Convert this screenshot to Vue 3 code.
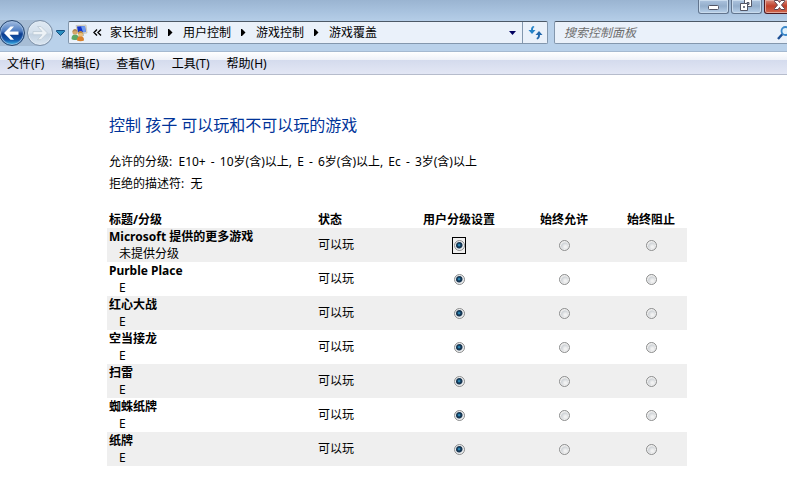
<script setup>
import { ref } from 'vue'

const crumbs = ['家长控制', '用户控制', '游戏控制', '游戏覆盖']
const menus = ['文件(F)', '编辑(E)', '查看(V)', '工具(T)', '帮助(H)']
const allowed = [
  { code: 'E10+', age: '10岁(含)以上' },
  { code: 'E', age: '6岁(含)以上' },
  { code: 'Ec', age: '3岁(含)以上' },
]
const options = [
  { value: 'rating', label: '用户分级设置' },
  { value: 'allow', label: '始终允许' },
  { value: 'block', label: '始终阻止' },
]
const games = ref([
  { title: 'Microsoft 提供的更多游戏', rating: '未提供分级', choice: 'rating', focused: true },
  { title: 'Purble Place', rating: 'E', choice: 'rating' },
  { title: '红心大战', rating: 'E', choice: 'rating' },
  { title: '空当接龙', rating: 'E', choice: 'rating' },
  { title: '扫雷', rating: 'E', choice: 'rating' },
  { title: '蜘蛛纸牌', rating: 'E', choice: 'rating' },
  { title: '纸牌', rating: 'E', choice: 'rating' },
])
const query = ref('')
</script>

<template>
  <div class="window">
    <header class="frame">
      <div class="captions">
        <button class="caption" aria-label="最小化">
          <svg width="31" height="14" viewBox="0 0 31 14"><rect x="10.500" y="5.500" width="10" height="4" rx="1" fill="#fff" stroke="#535666" /></svg>
        </button>
        <button class="caption" aria-label="还原">
          <svg width="31" height="14" viewBox="0 0 31 14" fill="#fff" stroke="#535666">
            <path d="M13.500-.5h7v7h-7z" /><path d="M16 2.500h2v2h-2z" fill="#9ab0cb" />
            <path d="M9.500 3.500h7v7h-7z" /><path d="M12.500 6.500h1v1h-1z" fill="#9ab0cb" />
          </svg>
        </button>
        <button class="caption close" aria-label="关闭">
          <svg width="31" height="14" viewBox="0 0 31 14"><path d="M10.500.5h3.500l1.500 2 1.500-2h3.500v1L17.500 5l3 3.500v1H17l-1.500-2-1.500 2h-3.500v-1l3-3.500-3-3.500z" fill="#fff" stroke="#5b4550" /></svg>
        </button>
      </div>
      <div class="nav">
        <div class="travel">
          <button class="round back" aria-label="后退">
            <svg width="26" height="26" viewBox="0 0 26 26"><path d="M5 13l6.500-6.500H15L10.500 11.500h9v3.200h-9l4.500 5h-3.500z" fill="#fff" /></svg>
          </button>
          <button class="round forward" aria-label="前进">
            <svg width="26" height="26" viewBox="0 0 26 26"><path d="M20.500 13L14 6.500h-3.500l4.500 5H6v3.200h9l-4.500 5H14z" fill="#edf2f6" stroke="#bccad6" stroke-width=".8" /></svg>
          </button>
        </div>
        <button class="recent" aria-label="最近页面">
          <svg width="9" height="6" viewBox="0 0 9 6"><path d="M.5.5h8v1L4.500 5.500.5 1.500z" fill="#2b8fc0" stroke="#164f80" /></svg>
        </button>
        <div class="address">
          <svg class="place" width="17" height="18" viewBox="0 0 17 18">
            <path d="M5 1.500l10-.5 1 8-9 1z" fill="#e2ded0" stroke="#b9b49f" stroke-width=".6" />
            <path d="M6 2.500l8-.5.800 6L7 8.500z" fill="#1334c8" /><path d="M10 2.300l4-.3.800 6-2.800.2z" fill="#6c9af0" />
            <path d="M10 9h3v3h-3z" fill="#c4bfad" />
            <path d="M.5 15c0-3 1-4.500 3.500-4.500S8 12 8 15c-2 1.300-6 1.300-7.500 0z" fill="#5fa866" />
            <circle cx="4" cy="8" r="2.600" fill="#d5a66a" /><path d="M1.500 8c0-4 5-4 5 0-1-1.500-3.500-1.500-5 0z" fill="#b08a55" />
            <path d="M6 16.500c0-3 1-4.500 3.500-4.500s3.500 1.500 3.500 4.500c-2 1-5 1-7 0z" fill="#d9812c" />
            <circle cx="9.500" cy="10" r="2.500" fill="#edc07b" /><path d="M7 10c0-4 5-4 5 0-1-1.500-3.500-1.500-5 0z" fill="#b98a44" />
          </svg>
          <button class="more" aria-label="更多位置">
            <svg width="9" height="7" viewBox="0 0 9 7" fill="none" stroke="#000" stroke-width="1.400"><path d="M4 .5l-3 3 3 3M8 .5l-3 3 3 3" /></svg>
          </button>
          <nav class="crumbs">
            <template v-for="(crumb, i) in crumbs" :key="crumb">
              <svg v-if="i" width="5" height="7" viewBox="0 0 5 7"><path d="M0 0h1l3.500 3.500L1 7H0z" /></svg>
              <a href="#">{{ crumb }}</a>
            </template>
          </nav>
          <button class="drop" aria-label="以前的位置">
            <svg width="7" height="4" viewBox="0 0 7 4"><path d="M0 0h7L3.500 4z" fill="#000060" /></svg>
          </button>
          <button class="refresh" aria-label="刷新">
            <svg width="15" height="14" viewBox="0 0 15 14">
              <path d="M5.500 0C3.500.5 3 2 3 4H.5L4 8l3.500-4H5c0-1.500.2-2.500 1.500-3z" fill="#2583c8" />
              <path d="M9 13.500c2-.5 3-2 3-4.500h2.500L11 5 7.500 9H10c0 1.500-.2 2.500-1.500 3z" fill="#2368ac" />
            </svg>
          </button>
        </div>
        <label class="search">
          <input v-model="query" type="search" placeholder="搜索控制面板" aria-label="搜索控制面板" />
          <svg width="14" height="14" viewBox="0 0 14 14" fill="none"><path d="M1 13l4.500-5" stroke="#1c4f95" stroke-width="2.400" /><circle cx="8.500" cy="5" r="4" stroke="#3b88c9" stroke-width="1.800" fill="#e0f1fc" /></svg>
        </label>
      </div>
    </header>

    <nav class="menubar">
      <button v-for="menu in menus" :key="menu">{{ menu }}</button>
    </nav>

    <main>
      <h1>控制 孩子 可以玩和不可以玩的游戏</h1>
      <p>
        允许的分级:&nbsp;
        <span v-for="(item, i) in allowed" :key="item.code" class="allowed">{{ item.code }} <span class="dash">-</span> {{ item.age }}{{ i < allowed.length - 1 ? ', ' : '' }}</span>
      </p>
      <p>拒绝的描述符:&nbsp; 无</p>
      <table>
        <colgroup><col /><col class="c-status" /><col class="c-rating" /><col class="c-allow" /><col class="c-block" /></colgroup>
        <thead>
          <tr>
            <th>标题/分级</th>
            <th>状态</th>
            <th v-for="option in options" :key="option.value" class="pick">{{ option.label }}</th>
          </tr>
        </thead>
        <tbody>
          <tr v-for="(game, i) in games" :key="game.title">
            <td>
              <strong>{{ game.title }}</strong>
              <span class="sub">{{ game.rating }}</span>
            </td>
            <td class="status">可以玩</td>
            <td v-for="option in options" :key="option.value" class="pick">
              <label :class="{ focused: game.focused && option.value === 'rating' }">
                <input v-model="game.choice" type="radio" :name="'game' + i" :value="option.value" :aria-label="game.title + ' ' + option.label" />
              </label>
            </td>
          </tr>
        </tbody>
      </table>
    </main>
  </div>
</template>

<style>
body {
  margin: 0;
  background: #fff;
}
</style>

<style scoped>
.window {
  overflow: hidden;
  font: 12px/17px "Noto Sans", "Noto Sans CJK SC", sans-serif;
  color: #000;
}
button {
  font: inherit;
  color: inherit;
  padding: 0;
  border: 0;
  background: none;
}
svg {
  display: block;
  flex: none;
}
.frame {
  background: linear-gradient(#9ab4d1, #a9c3df 12px, #b9d1ea 24px, #b9d1ea);
  border-bottom: 1px solid #a5b9d0;
}
.captions {
  display: flex;
  justify-content: flex-end;
  gap: 2px;
  height: 14px;
  margin-right: -8px;
}
.caption {
  box-sizing: border-box;
  width: 31px;
  border: 1px solid #62758e;
  border-top: 0;
  border-radius: 0 0 3px 3px;
  background: linear-gradient(#adc4df, #94aecb 6px, #b9d1ea);
  box-shadow: inset 0 0 0 1px #c9dbed;
  overflow: hidden;
}
.caption svg {
  margin-left: -1px;
}
.close {
  border-color: #4b1820;
  background: linear-gradient(#d98c7c, #c0412b 6px, #d0684f);
  box-shadow: inset 0 0 0 1px #e2a79b;
}
.nav {
  display: flex;
  align-items: center;
  height: 37px;
}
.travel {
  display: flex;
  gap: 2px;
  margin: 0 3px 0 -1px;
  border-radius: 0 14px 14px 0;
  background: #a7bdd5;
}
.round {
  box-sizing: border-box;
  width: 26px;
  height: 26px;
  border-radius: 50%;
  border: 1px solid #26456f;
  overflow: hidden;
}
.round svg {
  margin: -1px;
}
.back {
  background: linear-gradient(#a3bce0, #4f7ec3 10px, #0c3c8e 13px, #1257ac 19px, #41c0ee);
  box-shadow: inset 0 0 1px 1px #9fbde0;
}
.forward {
  border-color: #7c90a8;
  background: linear-gradient(#dfe9f3, #d3dfeb 12px, #c2d1e0 13px, #dbe7f2);
  box-shadow: inset 0 0 0 1px #e2ebf4;
}
.recent {
  display: grid;
  place-items: center;
  width: 9px;
  margin-right: 3px;
}
.address,
.search {
  box-sizing: border-box;
  display: flex;
  align-items: center;
  height: 23px;
  border: 1px solid #8397ad;
  border-top-color: #4c5967;
  border-radius: 2px;
  background: #eaf1fa;
}
.address {
  flex: 1;
  min-width: 0;
  padding-left: 2px;
}
.more {
  margin: 0 8px 0 5px;
}
.crumbs {
  flex: 1;
  display: flex;
  align-items: center;
  gap: 10px;
  white-space: nowrap;
  overflow: hidden;
}
.crumbs a {
  color: inherit;
  text-decoration: none;
}
.drop {
  padding: 0 6px;
}
.refresh {
  display: grid;
  place-items: center;
  width: 25px;
  height: 21px;
  border-left: 1px solid #8397ad;
}
.search {
  width: 240px;
  margin: 0 -7px 0 6px;
}
.search input {
  flex: 1;
  min-width: 0;
  padding: 0 0 0 9px;
  border: 0;
  outline: 0;
  background: none;
  font: inherit;
}
.search input::placeholder {
  font-style: italic;
  color: #6d6d6d;
  opacity: 1;
}
.search svg {
  margin-right: 2px;
}
.menubar {
  display: flex;
  gap: 17px;
  height: 22px;
  padding-left: 7px;
  border-bottom: 1px solid #b6bccc;
  background: linear-gradient(#fff, #eef1f8 8px, #d4dbed 8px, #e3e7f5);
}
main {
  padding: 38px 100px 34px 107px;
}
h1 {
  margin: 0 0 14px;
  padding-left: 2px;
  font-size: 16px;
  font-weight: 400;
  line-height: 24px;
  color: #003399;
}
p {
  margin: 0;
  padding-left: 2px;
  line-height: 22px;
}
.allowed + .allowed {
  margin-left: 2px;
}
.dash {
  margin: 0 2px;
}
table {
  width: 100%;
  max-width: 580px;
  margin-top: 16px;
  table-layout: fixed;
  border-collapse: collapse;
}
.c-status { width: 90px; }
.c-rating { width: 108px; }
.c-allow { width: 102px; }
.c-block { width: 72px; }
th,
td {
  padding: 0 2px;
  text-align: left;
  white-space: nowrap;
}
strong,
.sub {
  display: block;
}
.sub {
  padding-left: 10px;
}
.status {
  padding: 0 3px 2px;
}
thead th:nth-child(2) {
  padding-left: 3px;
}
tbody tr:nth-child(odd) {
  background: #efefef;
}
th.pick,
td.pick {
  padding: 0;
  text-align: center;
}
.pick label {
  display: inline-grid;
  place-items: center;
  width: 12px;
  height: 15px;
  border: 1px solid transparent;
  vertical-align: middle;
}
.pick label.focused {
  border-color: #000;
}
.pick input {
  appearance: none;
  box-sizing: border-box;
  width: 11px;
  height: 11px;
  margin: 0;
  border: 1px solid #8e8f8f;
  border-radius: 50%;
  background: radial-gradient(circle at 60% 65%, #f2f2f2 1px, #cfd3d7 4px, #e9e9e9 5px);
  box-shadow: inset 0 0 0 1px #f0f0f0;
}
.pick input:checked {
  background: radial-gradient(circle at 45% 45%, #5cc0e4 0, #1a6796 1px, #14344f 2px, #1c3a56 3px, #e8ebee 4px);
}
</style>
